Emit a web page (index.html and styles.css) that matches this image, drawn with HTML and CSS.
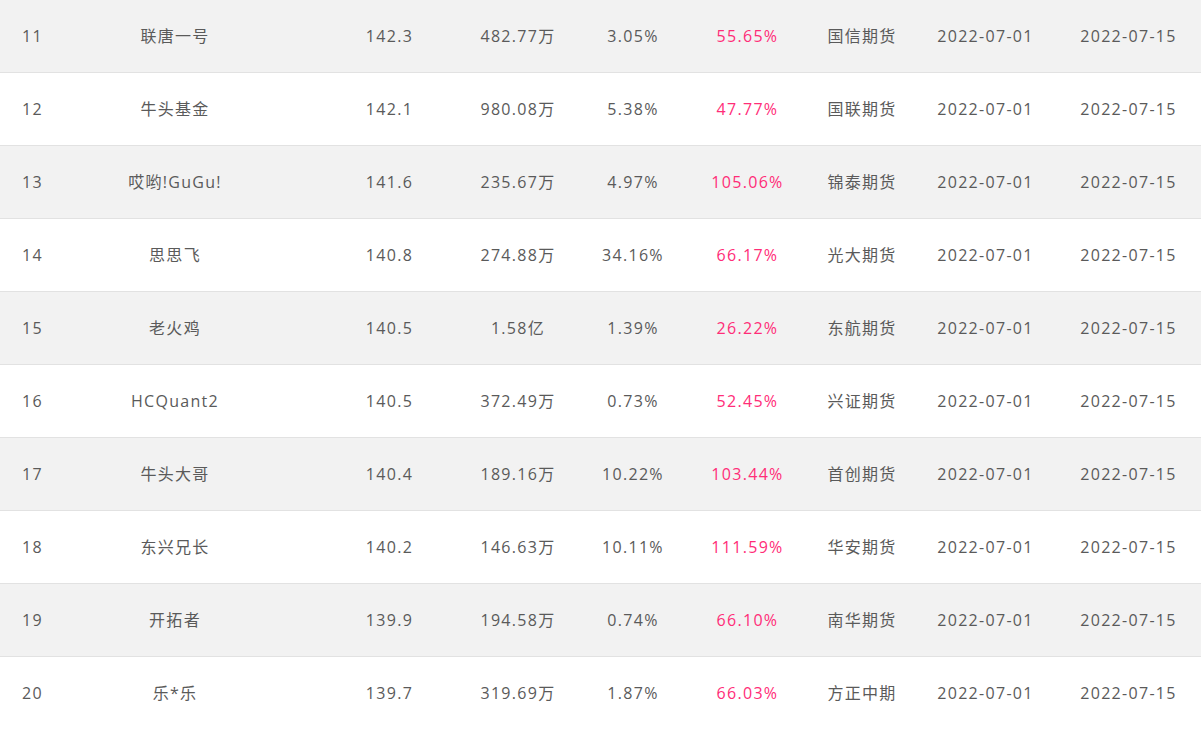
FILE: index.html
```html
<!DOCTYPE html>
<html lang="zh-CN">
<head>
<meta charset="utf-8">
<title>排行榜</title>
<link rel="stylesheet" href="styles.css">
</head>
<body>
<div class="table">
  <div class="row">
    <div class="c rank">11</div><div class="c name">联唐一号</div><div class="c score">142.3</div><div class="c amount">482.77万</div><div class="c dd">3.05%</div><div class="c ret">55.65%</div><div class="c broker">国信期货</div><div class="c start">2022-07-01</div><div class="c end">2022-07-15</div>
  </div>
  <div class="row">
    <div class="c rank">12</div><div class="c name">牛头基金</div><div class="c score">142.1</div><div class="c amount">980.08万</div><div class="c dd">5.38%</div><div class="c ret">47.77%</div><div class="c broker">国联期货</div><div class="c start">2022-07-01</div><div class="c end">2022-07-15</div>
  </div>
  <div class="row">
    <div class="c rank">13</div><div class="c name">哎哟!GuGu!</div><div class="c score">141.6</div><div class="c amount">235.67万</div><div class="c dd">4.97%</div><div class="c ret">105.06%</div><div class="c broker">锦泰期货</div><div class="c start">2022-07-01</div><div class="c end">2022-07-15</div>
  </div>
  <div class="row">
    <div class="c rank">14</div><div class="c name">思思飞</div><div class="c score">140.8</div><div class="c amount">274.88万</div><div class="c dd">34.16%</div><div class="c ret">66.17%</div><div class="c broker">光大期货</div><div class="c start">2022-07-01</div><div class="c end">2022-07-15</div>
  </div>
  <div class="row">
    <div class="c rank">15</div><div class="c name">老火鸡</div><div class="c score">140.5</div><div class="c amount">1.58亿</div><div class="c dd">1.39%</div><div class="c ret">26.22%</div><div class="c broker">东航期货</div><div class="c start">2022-07-01</div><div class="c end">2022-07-15</div>
  </div>
  <div class="row">
    <div class="c rank">16</div><div class="c name">HCQuant2</div><div class="c score">140.5</div><div class="c amount">372.49万</div><div class="c dd">0.73%</div><div class="c ret">52.45%</div><div class="c broker">兴证期货</div><div class="c start">2022-07-01</div><div class="c end">2022-07-15</div>
  </div>
  <div class="row">
    <div class="c rank">17</div><div class="c name">牛头大哥</div><div class="c score">140.4</div><div class="c amount">189.16万</div><div class="c dd">10.22%</div><div class="c ret">103.44%</div><div class="c broker">首创期货</div><div class="c start">2022-07-01</div><div class="c end">2022-07-15</div>
  </div>
  <div class="row">
    <div class="c rank">18</div><div class="c name">东兴兄长</div><div class="c score">140.2</div><div class="c amount">146.63万</div><div class="c dd">10.11%</div><div class="c ret">111.59%</div><div class="c broker">华安期货</div><div class="c start">2022-07-01</div><div class="c end">2022-07-15</div>
  </div>
  <div class="row">
    <div class="c rank">19</div><div class="c name">开拓者</div><div class="c score">139.9</div><div class="c amount">194.58万</div><div class="c dd">0.74%</div><div class="c ret">66.10%</div><div class="c broker">南华期货</div><div class="c start">2022-07-01</div><div class="c end">2022-07-15</div>
  </div>
  <div class="row">
    <div class="c rank">20</div><div class="c name">乐*乐</div><div class="c score">139.7</div><div class="c amount">319.69万</div><div class="c dd">1.87%</div><div class="c ret">66.03%</div><div class="c broker">方正中期</div><div class="c start">2022-07-01</div><div class="c end">2022-07-15</div>
  </div>
</div>
</body>
</html>
```
FILE: styles.css
```css
html, body {
  margin: 0;
  padding: 0;
  background: #ffffff;
}
body {
  font-family: "Open Sans", "Noto Sans CJK SC", sans-serif;
  font-size: 16px;
  color: #5a5a5a;
  letter-spacing: 1.3px;
  overflow: hidden;
}
.table {
  width: 1201px;
}
.row {
  display: grid;
  grid-template-columns: 103px 179px 172px 121px 115px 115px 119px 133px 144px;
  height: 72px;
  align-items: center;
  border-bottom: 1px solid #e2e2e2;
}
.row:nth-child(odd) {
  background: #f2f2f2;
}
.c {
  text-align: center;
  white-space: nowrap;
  line-height: 20px;
}
.rank {
  text-align: left;
  padding-left: 22px;
}
.name { padding-right: 35px; }
.score { padding-left: 43px; }
.amount { padding-left: 7px; }
.dd { padding-left: 1px; }
.ret { color: #ff2d78; }
.broker { padding-right: 5px; }
.start { padding-right: 10px; }
.end { padding-right: 1px; }
```
